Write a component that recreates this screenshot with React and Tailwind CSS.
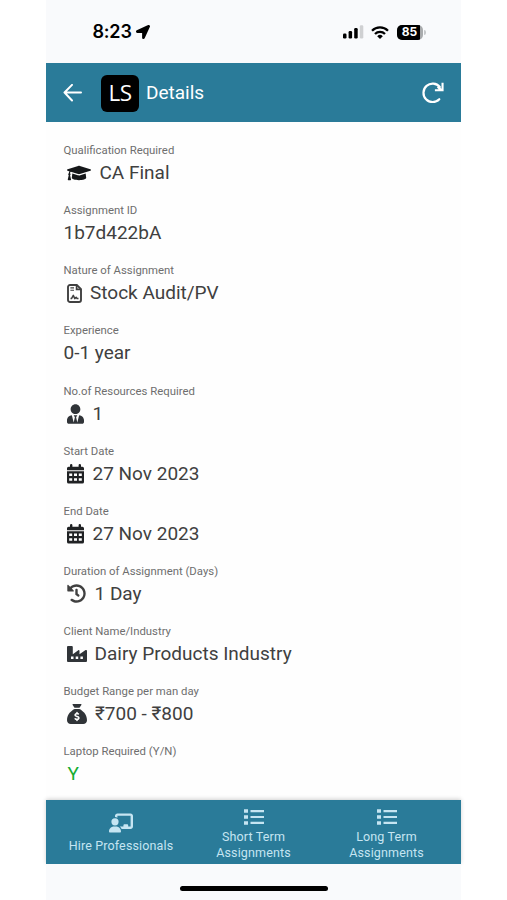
import React from 'react';
import { FaGraduationCap, FaUserTie, FaHistory, FaLocationArrow } from 'react-icons/fa';
import { FaSackDollar, FaChalkboardUser } from 'react-icons/fa6';

const ContractIcon = ({ className }) => (
  <svg viewBox="0 0 15 19" className={className} fill="none" stroke="currentColor">
    <path d="M3 1h6.8L14 5.2V16a2 2 0 0 1-2 2H3a2 2 0 0 1-2-2V3a2 2 0 0 1 2-2Z" strokeWidth="1.9" />
    <path d="M9.6 1v4.4H14" strokeWidth="1.7" />
    <path d="M3.4 3.9h3.6M3.4 6.2h3.6" strokeWidth="1.1" />
    <path d="M3.5 14.6h1l1.8-3.2 1.5 3.2 1.4-1.3.9 1.3h1.4" strokeWidth="1.5" strokeLinejoin="round" />
  </svg>
);

const CalendarIcon = ({ className }) => (
  <svg viewBox="0 0 17 20" className={className} fill="currentColor">
    <path d="M3 1.2a1.2 1.2 0 0 1 2.4 0v1.5h6.2V1.2a1.2 1.2 0 0 1 2.4 0v1.5h1.4A1.6 1.6 0 0 1 17 4.3v1.9H0V4.3a1.6 1.6 0 0 1 1.6-1.6H3Z" />
    <path
      fillRule="evenodd"
      d="M0 7.3h17v10.6a1.7 1.7 0 0 1-1.7 1.7H1.7A1.7 1.7 0 0 1 0 17.9Zm2.2 2.2v2.6h3V9.5Zm4.8 0v2.6h3V9.5Zm4.8 0v2.6h3V9.5ZM2.2 14.2v2.6h3v-2.6Zm4.8 0v2.6h3v-2.6Zm4.8 0v2.6h3v-2.6Z"
    />
  </svg>
);

const FactoryIcon = ({ className }) => (
  <svg viewBox="0 0 20 16" className={className} fill="currentColor">
    <path
      fillRule="evenodd"
      d="M1 0h3.8a1 1 0 0 1 1 1v7.2l5.5-3.9c.6-.4 1.2-.1 1.2.6v3.3l5.7-3.9c.7-.5 1.8-.2 1.8.8V15a1 1 0 0 1-1 1H1a1 1 0 0 1-1-1V1a1 1 0 0 1 1-1Zm3 10.6v2.3h2.5v-2.3Zm4.7 0v2.3h2.5v-2.3Zm4.7 0v2.3h2.5v-2.3Z"
    />
  </svg>
);

const ListIcon = () => (
  <svg viewBox="0 0 20 16" className="h-[16px] w-[20px]" fill="currentColor">
    <path d="M0 .3h4v3.4H0ZM0 6.3h4v3.4H0ZM0 12.3h4v3.4H0Z" />
    <path d="M6.5 1H20v2.2H6.5ZM6.5 6.9H20v2.2H6.5ZM6.5 12.8H20V15H6.5Z" />
  </svg>
);

const details = [
  { label: 'Qualification Required', value: 'CA Final', icon: <FaGraduationCap className="ml-[3.5px] mr-[8.5px] h-[24px] w-[24px] text-[#151719]" /> },
  { label: 'Assignment ID', value: '1b7d422bA' },
  { label: 'Nature of Assignment', value: 'Stock Audit/PV', icon: <ContractIcon className="ml-[3.5px] mr-[8px] h-[19px] w-[15px]" /> },
  { label: 'Experience', value: '0-1 year' },
  { label: 'No.of Resources Required', value: '1', icon: <FaUserTie className="ml-[3.5px] mr-[8.5px] h-[20px] w-[17px] text-[#303438]" /> },
  { label: 'Start Date', value: '27 Nov 2023', icon: <CalendarIcon className="ml-[3.5px] mr-[8.5px] h-[20px] w-[17px] text-[#202224]" /> },
  { label: 'End Date', value: '27 Nov 2023', icon: <CalendarIcon className="ml-[3.5px] mr-[8.5px] h-[20px] w-[17px] text-[#202224]" /> },
  { label: 'Duration of Assignment (Days)', value: '1 Day', icon: <FaHistory className="ml-[3.5px] mr-[8.5px] h-[19px] w-[19px]" /> },
  { label: 'Client Name/Industry', value: 'Dairy Products Industry', icon: <FactoryIcon className="ml-[3.5px] mr-[7.5px] h-[16px] w-[20px] text-[#303438]" /> },
  { label: 'Budget Range per man day', value: '₹700 - ₹800', icon: <FaSackDollar className="ml-[3.5px] mr-[8px] h-[20px] w-[20px] text-[#303438]" /> },
  { label: 'Laptop Required (Y/N)', value: 'Y', green: true },
];

const StatusBar = () => (
  <div className="flex h-[63px] flex-none items-center justify-between bg-[#f9fafc] pl-[46.5px] pr-[35px] pt-px">
    <div className="flex items-center gap-[4px] text-black">
      <span className="font-[Inter] text-[18px] font-semibold leading-none tracking-[-0.2px]">8:23</span>
      <FaLocationArrow className="h-[14px] w-[14px]" />
    </div>
    <div className="flex items-center">
      <svg viewBox="0 0 21 14" className="h-[14px] w-[21px]">
        <rect x="0" y="8.5" width="3.5" height="5" rx="1.2" />
        <rect x="5.6" y="6" width="3.5" height="7.5" rx="1.2" />
        <rect x="11.2" y="3" width="3.5" height="10.5" rx="1.2" />
        <rect x="16.8" y="0.3" width="3.5" height="13.2" rx="1.2" fill="#cfd0d2" />
      </svg>
      <svg viewBox="0 0 18 13" className="ml-[7px] h-[13px] w-[18px]" fill="none" stroke="black" strokeWidth="2.3">
        <path d="M1 4.7a11.4 11.4 0 0 1 16 0" />
        <path d="M4 8a7 7 0 0 1 10 0" />
        <path d="M9 13 6.2 10.2a4 4 0 0 1 5.6 0Z" fill="black" stroke="none" />
      </svg>
      <div className="ml-[8px] flex h-[15px] w-[26px] overflow-hidden rounded-[5px] bg-[#a9abad]">
        <span className="flex h-full w-[23px] items-center justify-center bg-black pl-[2px] font-[Inter] text-[12px] font-bold leading-none text-white">85</span>
      </div>
      <span className="ml-px h-[5px] w-[2px] rounded-r-full bg-[#c6c8ca]"></span>
    </div>
  </div>
);

const Header = () => (
  <header className="flex h-[59px] flex-none items-center bg-[#2a7b99] pl-[17px] pr-[17px] text-white">
    <svg viewBox="0 0 19 18" className="h-[18px] w-[19px]" fill="none" stroke="currentColor" strokeWidth="2" strokeLinecap="round" strokeLinejoin="round">
      <path d="M18 8.5H1.5M9 .9 1.5 8.5 9 16.5" />
    </svg>
    <div className="ml-[19px] mt-px flex h-[37px] w-[38px] items-center justify-center rounded-[6px] bg-black">
      <span className="font-['Open_Sans'] text-[22.5px] leading-none tracking-[-0.6px]">LS</span>
    </div>
    <h1 className="ml-[7px] font-[Roboto] text-[19px] leading-none">Details</h1>
    <svg viewBox="0 0 22 22" className="ml-auto h-[22px] w-[22px]" fill="none" stroke="currentColor" strokeWidth="2.2" strokeLinecap="round">
      <path d="M17.3 17.2A9.2 9.2 0 1 1 17.8 5" />
      <path d="M21.6.8v8.5h-8.7V7.2h3.7L14.9 5.5l1.6-1.6 3 2.8V.8Z" fill="currentColor" stroke="none" />
    </svg>
  </header>
);

const BottomNav = () => (
  <nav className="grid h-[64px] flex-none grid-cols-[149px_1fr_149px] bg-[#2a7b99] text-center text-[12.5px] leading-[16px] tracking-[0.15px] text-[#c6e5f2] shadow-[0_-1px_4px_rgba(0,0,0,0.18)]">
    <div className="flex flex-col items-center pl-px pt-[12px]">
      <FaChalkboardUser className="h-[22px] w-[24px]" />
      <span className="mt-[4px]">Hire Professionals</span>
    </div>
    <div className="flex flex-col items-center pt-[9px]">
      <ListIcon />
      <span className="mt-[4px]">Short Term<br />Assignments</span>
    </div>
    <div className="flex flex-col items-center pt-[9px]">
      <ListIcon />
      <span className="mt-[4px]">Long Term<br />Assignments</span>
    </div>
  </nav>
);

const App = () => {
  return (
    <div className="flex h-[900px] w-[507px] justify-center overflow-hidden bg-white font-[Roboto,sans-serif]">
      <div className="flex h-full w-[415px] flex-col">
        <StatusBar />
        <Header />
        <main className="flex-1 overflow-hidden bg-[#fefefe] pl-[17.5px] pt-[20px]">
          {details.map((item) => (
            <section key={item.label} className="h-[60.15px]">
              <p className="h-[16px] text-[11.35px] leading-[16px] text-[#6e6e6e]">{item.label}</p>
              <div className="mt-[2px] flex h-[26px] items-center text-[#404040]">
                {item.icon}
                <span className={item.green ? 'ml-[4px] text-[19px] leading-[26px] text-[#17ad32]' : 'text-[19px] leading-[26px]'}>
                  {item.value}
                </span>
              </div>
            </section>
          ))}
        </main>
        <BottomNav />
        <div className="flex h-[36px] flex-none justify-center bg-[#f9fafc] pt-[22px]">
          <div className="h-[5px] w-[148px] rounded-full bg-black"></div>
        </div>
      </div>
    </div>
  );
};

export default App;
